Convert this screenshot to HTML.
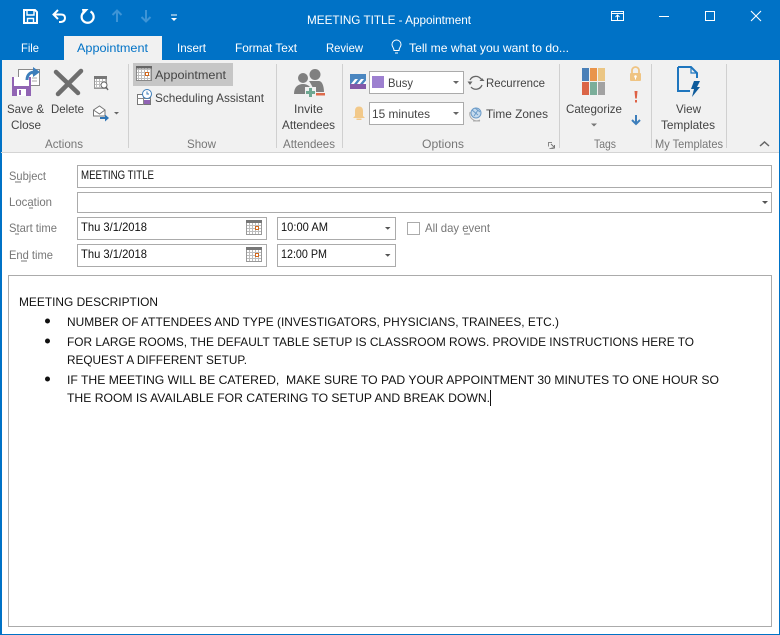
<!DOCTYPE html>
<html><head><meta charset="utf-8"><title>MEETING TITLE - Appointment</title>
<style>
html,body{margin:0;padding:0;background:#fff;width:780px;height:635px;overflow:hidden}
svg{display:block}
text{font-family:"Liberation Sans",sans-serif;font-size:12px;fill:#444;white-space:pre}
.w text{fill:#fff}
.k text{fill:#111}
.l text{fill:#777}
.b{fill:#fff;stroke:#ababab;stroke-width:1}
.s{stroke:#d0d0d0;stroke-width:1}
</style></head><body>
<svg width="780" height="635" viewBox="0 0 780 635" xmlns="http://www.w3.org/2000/svg">
<defs><pattern id="gr" width="3" height="3" patternUnits="userSpaceOnUse"><rect width="3" height="3" fill="#fff"/><path d="M0 .5H3M.5 0V3" stroke="#bdbdbd" stroke-width="1"/></pattern></defs>
<rect width="780" height="635" fill="#0072C6"/>
<rect x="2" y="60" width="777" height="574" fill="#fff"/>
<rect x="1" y="60" width="778" height="92" fill="#F1F1F1"/>
<rect x="1" y="60" width="1" height="574" fill="#0072C6"/>
<rect x="1" y="152" width="778" height="1" fill="#d4d4d4"/>
<rect x="64" y="36" width="98" height="24" fill="#F1F1F1"/>

<!-- QAT -->
<g fill="none" stroke="#fff" stroke-width="2">
<path d="M24 10H35L37 12V23H24Z"/>
<path d="M27 11V15H34V11" stroke-width="1.400"/><path d="M27.500 23V18.500H33.500V23" stroke-width="1.400"/>
<path d="M58 10L53.500 14.500L58 19M54 14.500H61Q65 14.500 65 18T61 22H59"/>
<path d="M90.500 11.500A6 6 0 1 1 84 12" stroke-width="2.200"/>
</g>
<path d="M82 9H88.500L83 15Z" fill="#fff"/>
<g fill="none" stroke="#3D94D6" stroke-width="2"><path d="M117 22V11M112.500 15L117 10.500L121.500 15"/><path d="M146 10V21M141.500 17L146 21.500L150.500 17"/></g>
<path d="M171 15H177" stroke="#fff" stroke-width="1"/><path d="M171 18H177L174 21Z" fill="#fff"/>

<g class="w">
<text x="307" y="24" textLength="164" lengthAdjust="spacingAndGlyphs">MEETING TITLE - Appointment</text>
<text x="21" y="52" textLength="18" lengthAdjust="spacingAndGlyphs">File</text>
<text x="177" y="52" textLength="29" lengthAdjust="spacingAndGlyphs">Insert</text>
<text x="235" y="52" textLength="62" lengthAdjust="spacingAndGlyphs">Format Text</text>
<text x="326" y="52" textLength="37" lengthAdjust="spacingAndGlyphs">Review</text>
<text x="409" y="52" textLength="160" lengthAdjust="spacingAndGlyphs">Tell me what you want to do...</text>
</g>
<text x="77" y="52" textLength="71" lengthAdjust="spacingAndGlyphs" style="fill:#0072C6">Appointment</text>
<g fill="none" stroke="#fff" stroke-width="1"><path d="M394 50.500C394 47.500 392 47 392 44.500A4.500 4.500 0 0 1 401 44.500C401 47 399 47.500 399 50.500Z"/><path d="M395 53H398"/></g>

<!-- window controls -->
<g fill="none" stroke="#fff" stroke-width="1">
<rect x="611.500" y="11.500" width="12" height="9"/><path d="M611 13.500H624"/><path d="M617.500 20V15M615.500 17L617.500 15L619.500 17"/>
<path d="M659 16.500H669"/>
<rect x="705.500" y="11.500" width="9" height="9"/>
<path d="M751 11L761 21M761 11L751 21" stroke-width="1.100"/>
</g>

<!-- separators -->
<g class="s"><path d="M128.500 64V148M276.500 64V148M342.500 64V148M559.500 64V148M651.500 64V148M726.500 64V148"/></g>

<!-- Save & close icon -->
<rect x="18.500" y="69.500" width="21" height="16" fill="#fff" stroke="#8a8a8a"/>
<path d="M32 74H37M32 78H37M32 81H37" stroke="#aaa"/>
<path d="M12 77H31V96H12Z" fill="#9164B4"/>
<rect x="14" y="77" width="15" height="9" fill="#fff"/>
<rect x="17" y="89" width="9" height="7" fill="#fff"/><rect x="19" y="90" width="2" height="5" fill="#9164B4"/>
<path d="M27 80C27 74 31 72 35 72" fill="none" stroke="#3D7EBB" stroke-width="3"/>
<path d="M33 67L40 72L33 77Z" fill="#3D7EBB"/>

<!-- delete X -->
<path d="M56 72L78 93M81 71L58 94" stroke="#6e6e6e" stroke-width="4.500" stroke-linecap="round" fill="none"/>

<!-- small cal icon -->
<rect x="94.500" y="76.500" width="12" height="12" fill="url(#gr)" stroke="#999"/><rect x="94" y="76" width="13" height="3" fill="#777"/>
<circle cx="104" cy="85" r="3" fill="#fff" stroke="#666"/><path d="M106 87L108 90" stroke="#666" stroke-width="1.400"/>
<!-- move icon -->
<path d="M93.500 116V110L99.500 106L105 110V116Z" fill="#fff" stroke="#777"/><path d="M93.500 110L99.500 114L105 110" fill="none" stroke="#777"/>
<path d="M100 118H106" stroke="#2E75B6" stroke-width="2"/><path d="M105 114.500L109 118L105 121.500Z" fill="#2E75B6"/>
<path d="M114 112H119L116.500 114.500Z" fill="#666"/>

<!-- show icons -->
<rect x="133" y="63" width="100" height="23" fill="#C6C6C6"/>
<rect x="136.500" y="66.500" width="15" height="14" fill="url(#gr)" stroke="#888"/><rect x="136" y="66" width="16" height="2.500" fill="#666"/>
<rect x="145.500" y="72.500" width="3" height="3" fill="#fff" stroke="#D2691E"/>
<rect x="137.500" y="94.500" width="13" height="10" fill="#fff" stroke="#777"/><path d="M137 98.500H151M143.500 94V105" stroke="#888"/><rect x="144" y="100" width="6" height="4" fill="#9164B4"/>
<circle cx="147" cy="94" r="4.500" fill="#fff" stroke="#3D7EBB"/><path d="M147 91.500V94H149" fill="none" stroke="#3D7EBB"/>

<!-- attendees icon -->
<circle cx="303" cy="78" r="5" fill="#808080"/><circle cx="315" cy="74.500" r="5.500" fill="#808080"/>
<path d="M294 94C294 87 298 84 303 84C308 84 312 87 312 94Z" fill="#808080"/>
<path d="M309 81H319C322 81 324 86 324 92H314C313 87 311 84 309 81Z" fill="#808080"/>
<path d="M306 88H315V97H306Z" fill="#F1F1F1" stroke="#F1F1F1" stroke-width="2"/>
<path d="M306 92.500H315M310.500 88V97" stroke="#6FA892" stroke-width="3"/>
<rect x="316" y="93" width="9" height="2.500" fill="#DE6B4C"/>

<!-- busy icon -->
<rect x="350" y="74" width="16" height="10" fill="#4A86C0"/>
<path d="M351 84L355 79H358L354 84ZM357 84L361 79H364L360 84ZM363 84L366 80.500V84Z" fill="#fff"/>
<rect x="350" y="84" width="16" height="5" fill="#8359A8"/>
<!-- bell -->
<path d="M355 116V111C355 108 356.500 106.500 359 106.500C361.500 106.500 363 108 363 111V116L365 118H353Z" fill="#F2C98A"/><rect x="356.500" y="118.500" width="5" height="1.500" fill="#F2C98A"/>

<rect class="b" x="369.500" y="71.500" width="94" height="22"/>
<rect x="372" y="76" width="12" height="12" fill="#9D80D0"/>
<path d="M453 81H459L456 84Z" fill="#666"/>
<rect class="b" x="369.500" y="102.500" width="94" height="22"/>
<path d="M453 112H459L456 115Z" fill="#666"/>

<!-- recurrence -->
<g fill="none" stroke="#666" stroke-width="1.300"><path d="M470 80A6.500 6.500 0 0 1 481 79"/><path d="M482 85A6.500 6.500 0 0 1 471 87"/></g>
<path d="M467.500 81.500H472.500L470 85ZM479.500 81L484.500 81L482 78Z" fill="#666"/>
<!-- globe -->
<circle cx="476" cy="113" r="5" fill="#C6DBEE" stroke="#6B9BC8"/><path d="M472 110L478 115M475 108L480 112M474 116L478 110" stroke="#6B9BC8" fill="none"/><path d="M470 112A7 7 0 0 0 480 120M473 121H480" stroke="#aaa" fill="none"/>

<!-- launcher -->
<path d="M548.500 146.500V142.500H552M553.500 148.500H549.500" fill="none" stroke="#888"/><path d="M551 144L554.500 147.500M554.500 145V148H551.500" fill="none" stroke="#777"/>

<!-- categorize -->
<rect x="582" y="68" width="7" height="13" fill="#4A80B8"/>
<rect x="590" y="68" width="7" height="13" fill="#E9944B"/>
<rect x="598" y="68" width="7" height="13" fill="#EBC684"/>
<rect x="582" y="82" width="7" height="13" fill="#DB6547"/>
<rect x="590" y="82" width="7" height="13" fill="#7BAE9A"/>
<rect x="598" y="82" width="7" height="13" fill="#A2A2A2"/>
<path d="M591 123.500H597L594 126.500Z" fill="#777"/>

<!-- lock, !, arrow -->
<path d="M632 73V70.500A3.500 3.500 0 0 1 639 70.500V73" fill="none" stroke="#EFC483" stroke-width="1.800"/>
<rect x="630" y="73" width="11" height="8" rx="1" fill="#EFC483"/><circle cx="635.500" cy="76.500" r="1.300" fill="#fff"/><rect x="635" y="77" width="1" height="2.500" fill="#fff"/>
<path d="M634.500 91H637.500L636.800 98.500H635.200Z" fill="#DE6246"/><rect x="635" y="100" width="2" height="2.500" fill="#DE6246"/>
<path d="M636 115V124M632 120L636 124L640 120" fill="none" stroke="#3D7EBB" stroke-width="2"/>

<!-- templates icon -->
<path d="M678 67H691L697 73V78M678 67V91H690" fill="none" stroke="#1F76BE" stroke-width="2"/>
<path d="M691 68V73H696" fill="none" stroke="#1F76BE" stroke-width="1.200"/>
<path d="M694 81H700L697 87H700L692 97L694 89H691Z" fill="#0F5C9C"/>

<!-- collapse -->
<path d="M760 146L764.500 142L769 146" fill="none" stroke="#666" stroke-width="1.500"/>

<!-- ribbon text -->
<g>
<text x="7" y="113" textLength="37" lengthAdjust="spacingAndGlyphs">Save &amp;</text>
<text x="11" y="129" textLength="30" lengthAdjust="spacingAndGlyphs">Close</text>
<text x="51" y="113" textLength="33" lengthAdjust="spacingAndGlyphs">Delete</text>
<text x="155" y="79" textLength="71" lengthAdjust="spacingAndGlyphs">Appointment</text>
<text x="155" y="102" textLength="109" lengthAdjust="spacingAndGlyphs">Scheduling Assistant</text>
<text x="294" y="113" textLength="29" lengthAdjust="spacingAndGlyphs">Invite</text>
<text x="282" y="129" textLength="53" lengthAdjust="spacingAndGlyphs">Attendees</text>
<text x="388" y="87" textLength="25" lengthAdjust="spacingAndGlyphs">Busy</text>
<text x="372" y="118" textLength="58" lengthAdjust="spacingAndGlyphs">15 minutes</text>
<text x="486" y="87" textLength="59" lengthAdjust="spacingAndGlyphs">Recurrence</text>
<text x="486" y="118" textLength="62" lengthAdjust="spacingAndGlyphs">Time Zones</text>
<text x="566" y="113" textLength="56" lengthAdjust="spacingAndGlyphs">Categorize</text>
<text x="676" y="113" textLength="25" lengthAdjust="spacingAndGlyphs">View</text>
<text x="661" y="129" textLength="54" lengthAdjust="spacingAndGlyphs">Templates</text>
</g>
<g class="l">
<text x="45" y="148" textLength="38" lengthAdjust="spacingAndGlyphs">Actions</text>
<text x="187" y="148" textLength="29" lengthAdjust="spacingAndGlyphs">Show</text>
<text x="283" y="148" textLength="52" lengthAdjust="spacingAndGlyphs">Attendees</text>
<text x="422" y="148" textLength="42" lengthAdjust="spacingAndGlyphs">Options</text>
<text x="594" y="148" textLength="22" lengthAdjust="spacingAndGlyphs">Tags</text>
<text x="655" y="148" textLength="68" lengthAdjust="spacingAndGlyphs">My Templates</text>
</g>

<!-- form -->
<g class="l">
<text x="9" y="180" textLength="37" lengthAdjust="spacingAndGlyphs">Subject</text>
<text x="9" y="206" textLength="43" lengthAdjust="spacingAndGlyphs">Location</text>
<text x="9" y="232" textLength="48" lengthAdjust="spacingAndGlyphs">Start time</text>
<text x="9" y="259" textLength="44" lengthAdjust="spacingAndGlyphs">End time</text>
<text x="425" y="232" textLength="65" lengthAdjust="spacingAndGlyphs">All day event</text>
</g>
<path d="M15 182H21M29 208H33M15 234H19M21 261H27M464 234H470" stroke="#777"/>

<rect class="b" x="77.500" y="165.500" width="694" height="22"/>
<rect class="b" x="77.500" y="192.500" width="694" height="20"/>
<path d="M762 201H768L765 204Z" fill="#555"/>
<rect class="b" x="77.500" y="217.500" width="189" height="22"/>
<rect class="b" x="77.500" y="244.500" width="189" height="22"/>
<rect class="b" x="277.500" y="217.500" width="118" height="22"/>
<rect class="b" x="277.500" y="244.500" width="118" height="22"/>
<path d="M385 227H390.500L387.750 229.750ZM385 254H390.500L387.750 256.750Z" fill="#555"/>
<rect class="b" x="407.500" y="222.500" width="12" height="12"/>

<g>
<rect x="246.500" y="220.500" width="15" height="14" fill="url(#gr)" stroke="#999"/><rect x="246" y="220" width="16" height="3" fill="#777"/><rect x="255.500" y="226.500" width="3" height="3" fill="#fff" stroke="#D2691E"/>
<rect x="246.500" y="247.500" width="15" height="14" fill="url(#gr)" stroke="#999"/><rect x="246" y="247" width="16" height="3" fill="#777"/><rect x="255.500" y="253.500" width="3" height="3" fill="#fff" stroke="#D2691E"/>
</g>

<g class="k">
<text x="81" y="179" textLength="73" lengthAdjust="spacingAndGlyphs">MEETING TITLE</text>
<text x="81" y="231" textLength="66" lengthAdjust="spacingAndGlyphs">Thu 3/1/2018</text>
<text x="81" y="258" textLength="66" lengthAdjust="spacingAndGlyphs">Thu 3/1/2018</text>
<text x="281" y="231" textLength="47" lengthAdjust="spacingAndGlyphs">10:00 AM</text>
<text x="281" y="258" textLength="46" lengthAdjust="spacingAndGlyphs">12:00 PM</text>
</g>

<rect class="b" x="8.500" y="275.500" width="763" height="351"/>
<g class="k">
<text x="19" y="306" textLength="139" lengthAdjust="spacingAndGlyphs">MEETING DESCRIPTION</text>
<text x="67" y="326" textLength="492" lengthAdjust="spacingAndGlyphs">NUMBER OF ATTENDEES AND TYPE (INVESTIGATORS, PHYSICIANS, TRAINEES, ETC.)</text>
<text x="67" y="346" textLength="627" lengthAdjust="spacingAndGlyphs">FOR LARGE ROOMS, THE DEFAULT TABLE SETUP IS CLASSROOM ROWS. PROVIDE INSTRUCTIONS HERE TO</text>
<text x="67" y="364" textLength="180" lengthAdjust="spacingAndGlyphs">REQUEST A DIFFERENT SETUP.</text>
<text x="67" y="384" textLength="652" lengthAdjust="spacingAndGlyphs">IF THE MEETING WILL BE CATERED,  MAKE SURE TO PAD YOUR APPOINTMENT 30 MINUTES TO ONE HOUR SO</text>
<text x="67" y="402" textLength="423" lengthAdjust="spacingAndGlyphs">THE ROOM IS AVAILABLE FOR CATERING TO SETUP AND BREAK DOWN.</text>
</g>
<circle cx="47.500" cy="321" r="2.500" fill="#111"/>
<circle cx="47.500" cy="341" r="2.500" fill="#111"/>
<circle cx="47.500" cy="379" r="2.500" fill="#111"/>
<rect x="490" y="390" width="1" height="16" fill="#111"/>
</svg>
</body></html>
